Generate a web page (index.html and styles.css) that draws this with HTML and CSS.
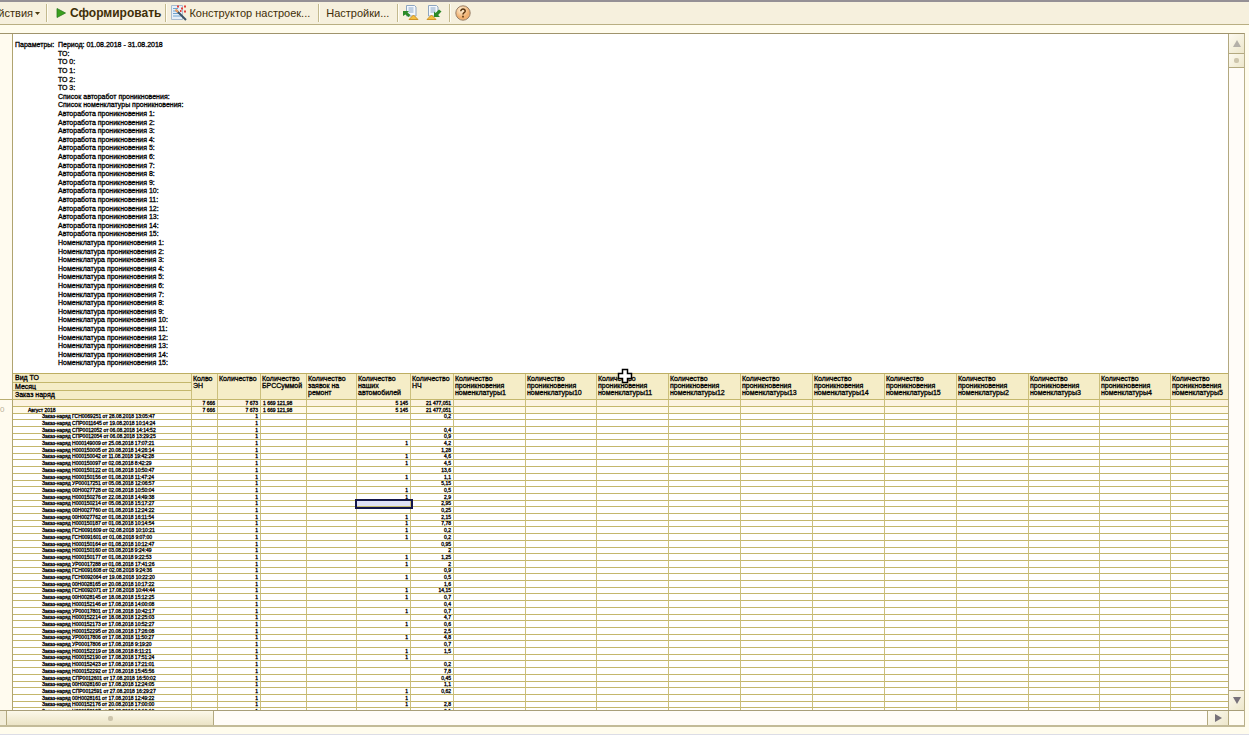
FILE: index.html
```html
<!DOCTYPE html>
<html lang="ru">
<head>
<meta charset="utf-8">
<title>Отчет</title>
<link rel="stylesheet" href="styles.css">
</head>
<body>
<div class="toolbar" role="toolbar">
  <button class="tool tool-menu" type="button"><span>йствия</span><svg width="5" height="3" viewBox="0 0 5 3"><path d="M0 0h5L2.500 3z" fill="#4a3a10"/></svg></button>
  <span class="sep"></span>
  <button class="tool tool-run" type="button"><svg width="10" height="10" viewBox="0 0 10 10"><path d="M1 .5v9L9.500 5z" fill="#3aa01c" stroke="#2b7a22" stroke-width=".8"/></svg>Сформировать</button>
  <span class="sep"></span>
  <button class="tool tool-wizard" type="button"><svg width="16" height="16" viewBox="0 0 16 16"><path d="M.5.500h11v14H.5z" fill="#e6eff8" stroke="#a9bccf"/><path d="M2 3.500h5M2 6h4M2 8.500h6M2 11h8" stroke="#6fa4d0"/><path d="M5 5l10 10" stroke="#3c5266" stroke-width="2"/><path d="M4.500 4.500l2.500 2.500" stroke="#f0a060" stroke-width="2"/><path d="M6 1.500h2M10 3.500h2M13 1.500h2M13 6.500h2M9 6h1.500" stroke="#e2403a" stroke-width="2"/></svg>Конструктор настроек...</button>
  <span class="sep"></span>
  <button class="tool tool-text" type="button">Настройки...</button>
  <span class="sep"></span>
  <button class="tool tool-icon" type="button" aria-label="Восстановить значения"><svg width="16" height="16" viewBox="0 0 16 16"><path d="M3.500.5h8l1.500 1.500v9H3.500z" fill="#f4f8fc" stroke="#8ea6c0"/><path d="M5.500 3h5M5.500 5h5M5.500 7h5" stroke="#8aa8c8"/><path d="M0 6h6L4.500 7.500l3 2.500-2 2-3-2.500L0 11z" fill="#2c8a28"/><path d="M10.500 10l4.500 4.500H6z" fill="#f4c040" stroke="#cf9428"/></svg></button>
  <button class="tool tool-icon" type="button" aria-label="Сохранить значения"><svg width="16" height="16" viewBox="0 0 16 16"><path d="M2.500.5h8l1.500 1.500v9H2.500z" fill="#f4f8fc" stroke="#8ea6c0"/><path d="M4.500 3h5M4.500 5h5M4.500 7h5" stroke="#8aa8c8"/><path d="M14 12H8V6.500L9.500 8 13 4.500 15.500 6.500 12 10z" fill="#2c8a28"/><path d="M5.500 10l4.500 4.500H1z" fill="#f4c040" stroke="#cf9428"/></svg></button>
  <span class="sep"></span>
  <button class="tool tool-icon" type="button" aria-label="Справка"><svg width="16" height="16" viewBox="0 0 16 16"><defs><radialGradient id="help" cx=".4" cy=".3"><stop offset="0" stop-color="#fff4dc"/><stop offset="1" stop-color="#f0b070"/></radialGradient></defs><circle cx="8" cy="8" r="7.200" fill="url(#help)" stroke="#98806a"/><path d="M5.800 6.200c0-3 4.600-2.700 4.400 0C10.100 7.600 8 7.800 8 9.400" fill="none" stroke="#5a3510" stroke-width="1.500"/><path d="M7.200 10.800h1.600v1.600H7.200z" fill="#5a3510"/></svg></button>
</div>

<main class="workspace">
  <div class="pane">
    <aside class="gutter"><div class="gutter-top"></div><div class="gutter-rows">0</div></aside>
    <section class="sheet">
      <div class="params">
        <div class="params-title">Параметры:</div>
        <ul class="params-list" id="params"></ul>
      </div>
      <table class="report">
        <colgroup id="cols"></colgroup>
        <thead id="head"></thead>
        <tbody id="rows"></tbody>
      </table>
    </section>
    <div class="vscroll">
      <button class="sb sb-up" type="button" aria-label="Вверх"><svg width="8" height="7" viewBox="0 0 8 7"><path d="M4 0l4 7H0z" fill="#b4b0a8"/></svg></button>
      <div class="vthumb"><span class="grip"></span></div>
      <div class="track"></div>
      <button class="sb sb-down" type="button" aria-label="Вниз"><svg width="8" height="7" viewBox="0 0 8 7"><path d="M0 0h8L4 7z" fill="#77717a"/></svg></button>
    </div>
  </div>
  <div class="hscroll">
    <div class="htrack-start"></div>
    <div class="hthumb"><span class="grip"></span></div>
    <div class="track"></div>
    <button class="sb sb-right" type="button" aria-label="Вправо"><svg width="7" height="8" viewBox="0 0 7 8"><path d="M0 0l7 4-7 4z" fill="#77717a"/></svg></button>
    <div class="corner"></div>
  </div>
</main>
<script src="report.js"></script>
</body>
</html>
```

FILE: styles.css
```css
* { box-sizing: border-box; }

body {
  margin: 0;
  height: 100vh;
  display: flex;
  flex-direction: column;
  overflow: hidden;
  border-bottom: 1px solid #dcdde6;
  background: #fffced;
  font-family: "Liberation Sans", Arial, sans-serif;
  color: #000;
}

button {
  margin: 0;
  padding: 0;
  border: 0;
  background: none;
  font: inherit;
  color: inherit;
}

svg { display: block; flex: none; }

/* Toolbar */
.toolbar {
  flex: none;
  display: flex;
  align-items: center;
  height: 25px;
  border-top: 2px solid #959095;
  border-bottom: 1px solid #b9af82;
  background: #f6f0dd;
  font-size: 11px;
  line-height: 16px;
  color: #3f2e08;
  white-space: nowrap;
}

.tool { display: flex; align-items: center; }
.tool-menu { width: 42px; padding-right: 2px; justify-content: flex-end; gap: 2px; }
.tool-run { padding-left: 8px; gap: 4px; font-size: 12px; font-weight: bold; }
.tool-wizard { padding: 0 4px; gap: 2px; }
.tool-text { padding: 0 4px 0 6px; }
.tool-icon { padding: 0 3px 0 4px; }

.sep {
  flex: none;
  width: 2px;
  height: 18px;
  margin-left: 4px;
  border-left: 1px solid #c3b98e;
  border-right: 1px solid #fffdf2;
}

/* Report area */
.workspace {
  flex: 1;
  min-height: 0;
  display: flex;
  flex-direction: column;
  margin: 8px 4px 7px 0;
  border-top: 1px solid #a0946c;
  border-right: 1px solid #b9b08a;
  border-bottom: 2px solid #c3bb98;
}

.pane { flex: 1; min-height: 0; display: flex; }

.gutter {
  flex: none;
  width: 13px;
  border-right: 1px solid #b0a470;
  background: #fffbef;
}
.gutter-top { height: 366px; border-bottom: 1px solid #b9ad70; }
.gutter-rows { padding-top: 5px; font-size: 8px; line-height: 10px; color: #b8b098; }

.sheet { flex: 1; min-width: 0; overflow: hidden; background: #fff; }

.params {
  display: flex;
  height: 339px;
  padding: 7px 0 0 2px;
  font-size: 7px;
  line-height: 8px;
  -webkit-text-stroke: 0.3px #000;
}
.params-title { width: 43px; }
.params-list { margin: 0; padding: 0; list-style: none; }
.params-list li { height: 9px; }
.params-list li:nth-child(5n+2), .params-list li:nth-child(5n) { height: 8px; }

.report {
  width: 1230px;
  table-layout: fixed;
  border-spacing: 0;
  border-top: 1px solid #bdae62;
  white-space: nowrap;
}
.report th, .report td {
  padding: 0 2px;
  border-right: 1px solid #cbbf7c;
  border-bottom: 1px solid #c4b76c;
  overflow: hidden;
  text-align: left;
  font-weight: normal;
}
.report th {
  background: #f5edc7;
  font-size: 7px;
  line-height: 7px;
  vertical-align: top;
  -webkit-text-stroke: 0.3px #000;
}
.report th[rowspan] { padding: 1px 1px 0; }
.report thead tr { height: 9px; }
.report thead tr:nth-child(2) { height: 8px; }
.report .pointed { position: relative; overflow: visible; }

.report tbody tr { height: 7px; }
.report tbody tr:nth-child(10n+3),
.report tbody tr:nth-child(10n+6),
.report tbody tr:nth-child(10n+9) { height: 6px; }
.report td {
  font-size: 5px;
  line-height: 5px;
  vertical-align: middle;
  -webkit-text-stroke: 0.3px #000;
}
.report .num { text-align: right; }
.report .month { padding-left: 15px; }
.report .order { padding-left: 29px; }
.report .total td { background: #fcf3e0; }
.report .subtotal td { background: #fffaea; }
.report .current { outline: 2px solid #14164a; background: #dfe0f8; }

.cursor { position: absolute; left: 20px; top: -6px; }

/* Scroll bars */
.sb, .vthumb, .hthumb {
  display: flex;
  align-items: center;
  justify-content: center;
  background: linear-gradient(135deg, #fdfaf0, #ede7cb);
}
.track { flex: 1; background: #fffcf8; }
.grip { width: 5px; height: 5px; border-radius: 2px; background: #cdc5ac; }

.vscroll {
  flex: none;
  width: 16px;
  display: flex;
  flex-direction: column;
  border-left: 1px solid #b3a980;
}
.sb-up { height: 20px; border-bottom: 1px solid #b3a980; }
.vthumb { height: 14px; border-bottom: 1px solid #b3a980; }
.sb-down { height: 20px; border-top: 1px solid #b3a980; }

.hscroll { flex: none; display: flex; height: 15px; border-top: 1px solid #a89e78; }
.htrack-start { width: 6px; background: #f2edd8; }
.hthumb {
  width: 208px;
  border-left: 1px solid #b3a980;
  border-right: 1px solid #b3a980;
  background: linear-gradient(#fcf9ea, #ebe4c6);
}
.sb-right { width: 21px; border-left: 1px solid #b3a980; }
.corner { width: 16px; border-left: 1px solid #b3a980; background: #fffcf3; }
```

FILE: report.js
```js
const range = (from, to) => Array.from({ length: to - from + 1 }, (_, i) => from + i);

const params = [
  'Период: 01.08.2018 - 31.08.2018',
  'ТО:',
  ...range(0, 3).map(n => `ТО ${n}:`),
  'Список авторабот проникновения:',
  'Список номенклатуры проникновения:',
  ...range(1, 15).map(n => `Авторабота проникновения ${n}:`),
  ...range(1, 15).map(n => `Номенклатура проникновения ${n}:`)
];
document.getElementById('params').innerHTML = params.map(p => `<li>${p}</li>`).join('');

const widths = [179, 26, 43, 46, 50, 54, 43, 72, 71, 72, 72, 72, 72, 72, 72, 71, 71, 72];
document.getElementById('cols').innerHTML = widths.map(w => `<col style="width:${w}px">`).join('');

const heads = ['Колво<br>ЭН', 'Количество', 'Количество<br>БРССуммой', 'Количество<br>заявок на<br>ремонт',
  'Количество<br>наших<br>автомобилей', 'Количество<br>НЧ',
  ...['1', '10', '11', '12', '13', '14', '15', '2', '3', '4', '5']
    .map(n => `Количество<br>проникновения<br>номенклатуры${n}`)];
const cursor = '<svg class="cursor" width="16" height="16" viewBox="0 0 16 16"><path d="M5.500 1.500h5v4h4v5h-4v4h-5v-4h-4v-5h4z" fill="#fff" stroke="#000" stroke-width="1.500"/></svg>';
document.getElementById('head').innerHTML =
  '<tr><th>Вид ТО</th>' +
  heads.map((h, i) => i === 8 ? `<th rowspan="3" class="pointed">${h}${cursor}</th>` : `<th rowspan="3">${h}</th>`).join('') +
  '</tr><tr><th>Месяц</th></tr><tr><th>Заказ наряд</th></tr>';

// number | day | time | our cars | standard hours
const orders = `ГСН0069251|28|13:05:47||0,2
СПР0011645|19|10:14:24||
СПР0012052|06|14:14:52||0,4
СПР0012054|06|13:29:25||0,9
Н000149009|25|17:07:21|1|4,2
Н000150005|20|14:26:14||1,28
Н000150042|11|19:42:28|1|4,6
Н000150097|02|8:42:29|1|4,5
Н000150122|01|10:50:47||13,6
Н000150156|01|11:47:24|1|1,1
УР00017251|05|12:06:57||5,15
00Н0027728|02|10:50:04|1|0,5
Н000150276|22|14:49:38|1|2,9
Н000150214|05|15:17:27||2,95
00Н0027760|01|12:24:22||0,25
00Н0027762|01|16:11:54|1|2,15
Н000150187|01|10:14:54|1|7,78
ГСН0091609|02|10:10:21|1|0,2
ГСН0091601|01|9:07:00|1|0,2
Н000150164|01|10:12:47||0,95
Н000150160|03|9:24:49||2
Н000150177|01|9:22:53|1|1,25
УР00017288|01|17:41:26|1|2
ГСН0091608|02|9:24:36||0,9
ГСН0092064|19|10:22:20|1|0,5
00Н0028165|20|10:17:22||1,6
ГСН0092071|17|10:44:44|1|14,15
00Н0028145|18|15:12:25|1|0,7
Н000152146|17|14:00:08||0,4
УР00017801|17|10:42:17|1|0,7
Н000152214|18|12:25:03||4,7
Н000152173|17|10:52:27|1|0,6
Н000152295|20|17:26:08||2,5
УР00017806|17|11:50:27|1|4,8
УР00017806|17|9:19:20||0,7
Н000152219|18|8:11:21|1|1,5
Н000152190|17|17:51:24|1|
Н000152423|17|17:21:01||0,2
Н000152292|17|15:45:56||7,8
СПР0012601|17|16:50:02||0,45
00Н0028160|17|12:24:05||1,1
СПР0012591|27|16:29:27|1|0,62
00Н0028161|17|12:49:22|1|
Н000152176|20|17:00:00|1|2,8
Н000152197|20|16:10:10||0,1`.split('\n').map(line => line.split('|'));

const empty = '<td></td>'.repeat(11);
const num = (value, extra = '') => `<td class="num${extra}">${value}</td>`;
const summary = (cls, label) =>
  `<tr class="${cls}"><td class="month">${label}</td>${num('7 666')}${num('7 673')}<td>1 669 121,98</td><td></td>${num('5 145')}${num('21 477,051')}${empty}</tr>`;

document.getElementById('rows').innerHTML =
  summary('total', '') + summary('subtotal', 'Август 2018') +
  orders.map(([id, day, time, ours, hours], i) =>
    `<tr><td class="order">Заказ-наряд ${id} от ${day}.08.2018 ${time}</td><td></td>${num(1)}<td></td><td></td>` +
    `${num(ours, i === 13 ? ' current' : '')}${num(hours)}${empty}</tr>`).join('');
```
